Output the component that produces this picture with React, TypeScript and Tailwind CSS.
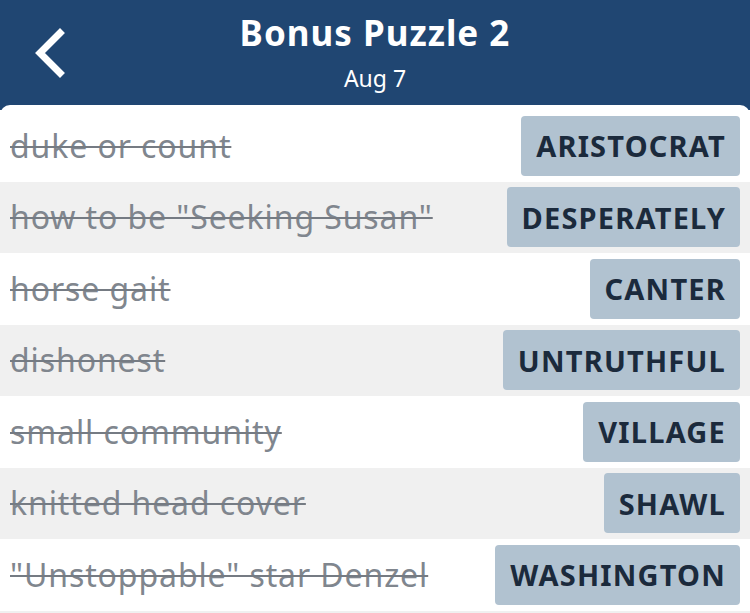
import React from 'react';

// clue / answer pairs, all solved
const clues = [
  { clue: 'duke or count', answer: 'ARISTOCRAT' },
  { clue: 'how to be "Seeking Susan"', answer: 'DESPERATELY' },
  { clue: 'horse gait', answer: 'CANTER' },
  { clue: 'dishonest', answer: 'UNTRUTHFUL' },
  { clue: 'small community', answer: 'VILLAGE' },
  { clue: 'knitted head cover', answer: 'SHAWL' },
  { clue: '"Unstoppable" star Denzel', answer: 'WASHINGTON' },
];

function BackChevron() {
  return (
    <svg width="40" height="56" viewBox="0 0 40 56" fill="none">
      <path d="M29 6 L9 26 L29 46" stroke="white" strokeWidth="7" strokeLinecap="square" strokeLinejoin="miter" />
    </svg>
  );
}

export default function App() {
  return (
    <div className="w-[750px] h-[613px] overflow-hidden bg-[#204672] font-['Noto_Sans','Open_Sans',sans-serif]">
      {/* --- HEADER --- */}
      <div className="relative h-[105px] flex flex-col items-center pt-[11px]">
        <button className="absolute left-[31px] top-[27px]">
          <BackChevron />
        </button>
        <h1 className="text-white text-[35px] font-bold leading-[44px] tracking-[1px]">Bonus Puzzle 2</h1>
        <span className="text-white text-[23px] leading-[30px] mt-[8px]">Aug 7</span>
      </div>

      {/* --- LISTA --- */}
      <div className="bg-white rounded-t-[10px] pt-[5px] h-[508px]">
        {clues.map((c, i) => (
          <div
            key={c.answer}
            className={`h-[71.5px] flex items-center justify-between pl-[10px] pr-[10px] ${i % 2 === 1 ? 'bg-[#f0f0f0]' : 'bg-white'}`}
          >
            <span className="text-[32px] tracking-[0.9px] text-[#80868e] line-through decoration-[2px] decoration-[#757b83]">{c.clue}</span>
            <span className="h-[60px] flex items-center pl-[15px] pr-[14px] rounded-[4px] bg-[#b1c2d0] text-[29px] tracking-[1.2px] font-bold text-[#1b2a3c]">
              {c.answer}
            </span>
          </div>
        ))}
        <div className="h-[71.5px] bg-[#f0f0f0]" />
      </div>
    </div>
  );
}
